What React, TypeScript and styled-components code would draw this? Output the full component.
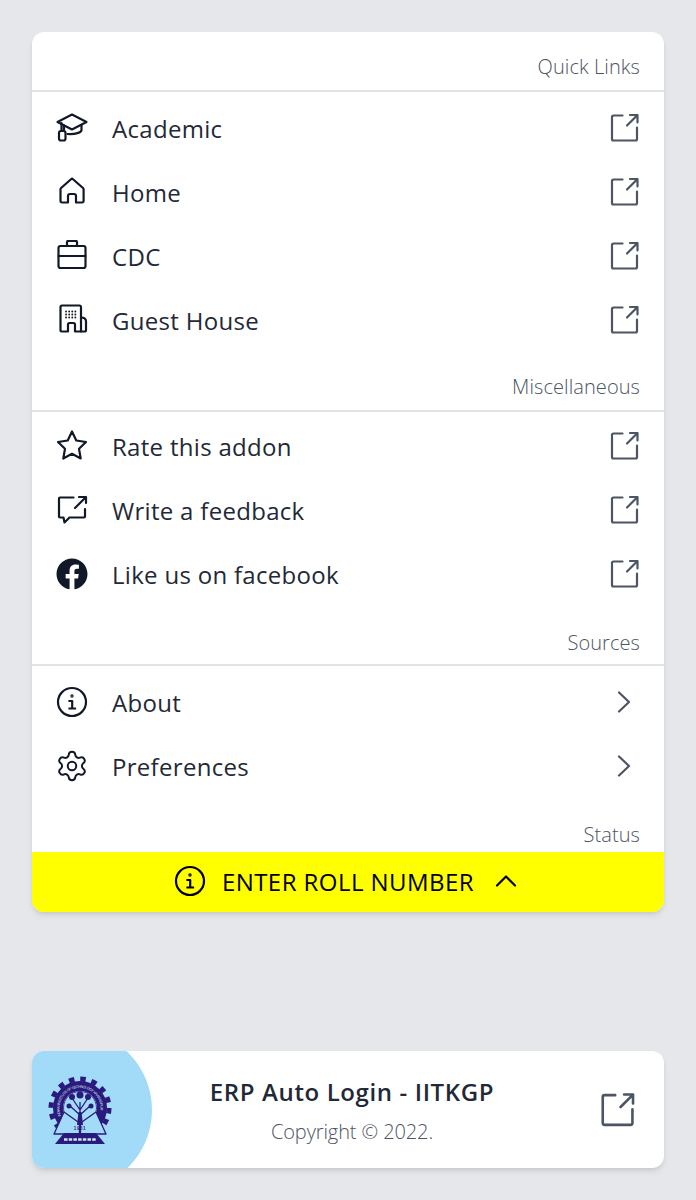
import { ReactNode } from 'react';
import styled, { createGlobalStyle } from 'styled-components';
import { FaFacebook } from 'react-icons/fa';
import { Settings } from 'lucide-react';

const GlobalStyle = createGlobalStyle`
  html, body {
    margin: 0;
    padding: 0;
    background: #e5e7eb;
  }
  * {
    box-sizing: border-box;
  }
`;

const Page = styled.div`
  width: 696px;
  height: 1200px;
  padding: 32px;
  display: flex;
  flex-direction: column;
  font-family: 'Open Sans', 'Noto Sans', sans-serif;
  color: #1f2937;
`;

const Card = styled.div`
  background: #fff;
  border-radius: 12px;
  overflow: hidden;
  box-shadow: 0 4px 6px -1px rgba(0, 0, 0, 0.1), 0 2px 4px -1px rgba(0, 0, 0, 0.06);
`;

const Section = styled.section<{ $top: number }>`
  padding-top: ${(p) => p.$top}px;
`;

const SectionLabel = styled.div<{ $height: number; $plain?: boolean }>`
  height: ${(p) => p.$height}px;
  padding: 0 24px;
  font-size: 20px;
  font-weight: 300;
  line-height: 28px;
  letter-spacing: 0.08px;
  text-align: right;
  color: #4b5563;
  border-bottom: ${(p) => (p.$plain ? 'none' : '2px solid #e1e3e8')};
`;

const RowList = styled.div<{ $top: number }>`
  padding-top: ${(p) => p.$top}px;
`;

const Row = styled.a`
  height: 64px;
  padding: 0 24px;
  display: flex;
  align-items: center;
  gap: 24px;
  font-size: 24px;
  letter-spacing: 0.3px;
  color: #1f2937;
`;

const RowText = styled.span`
  flex: 1;
`;

const RowIcon = styled.svg`
  width: 32px;
  height: 32px;
  flex: none;
  fill: none;
  stroke: #111827;
  stroke-width: 2.2;
  stroke-linecap: round;
  stroke-linejoin: round;
`;

const ActionIcon = styled(RowIcon)<{ $size?: number }>`
  width: ${(p) => p.$size ?? 32}px;
  height: ${(p) => p.$size ?? 32}px;
  stroke: #4b5563;
`;

const StatusBar = styled.div`
  height: 60px;
  padding-bottom: 2px;
  display: flex;
  align-items: center;
  justify-content: center;
  gap: 16px;
  background: #ffff00;
  color: #000;
  font-size: 24px;
  letter-spacing: 0.45px;
`;

const StatusIcon = styled(RowIcon)`
  stroke: #000;
`;

const Spacer = styled.div`
  flex: 1;
`;

const FooterCard = styled(Card)`
  height: 117px;
  display: grid;
  grid-template-columns: 120px 400px 112px;
  align-items: center;
`;

const LogoPanel = styled.div`
  position: relative;
  height: 117px;
  overflow: hidden;
  display: flex;
  align-items: center;
  padding-left: 12px;

  &::before {
    content: '';
    position: absolute;
    left: 0;
    top: -22.5px;
    width: 120px;
    height: 162px;
    border-radius: 0 81px 81px 0;
    background: #a1dbf8;
  }
`;

const Logo = styled.svg`
  position: relative;
  width: 72px;
  height: 80px;
`;

const FooterText = styled.div`
  display: flex;
  flex-direction: column;
  align-items: center;
  gap: 10px;
  padding-top: 3px;
`;

const FooterTitle = styled.div`
  font-size: 24px;
  font-weight: 600;
  line-height: 32px;
  letter-spacing: 0.62px;
`;

const FooterCopy = styled.div`
  font-size: 20px;
  font-weight: 300;
  line-height: 28px;
  letter-spacing: -0.1px;
  color: #4b5563;
`;

const FooterAction = styled.div`
  display: flex;
  padding-left: 46px;
`;

const External = ({ size }: { size?: number }) => (
  <ActionIcon $size={size} viewBox="0 0 32 32">
    <path d="M14.5 3.500H5.500A1.500 1.500 0 0 0 4 5v22a1.500 1.500 0 0 0 1.500 1.500h22A1.500 1.500 0 0 0 29 27V15.500" />
    <path d="M19 13.500 29.500 3M22 3h7.500v7.500" />
  </ActionIcon>
);

const Chevron = () => (
  <ActionIcon viewBox="0 0 32 32">
    <path d="M11 6.500 21 16 11 25.500" />
  </ActionIcon>
);

const CapIcon = () => (
  <RowIcon viewBox="0 0 32 32">
    <path d="M16 2.500 1.500 10 16 17.500 30.500 10Z" />
    <path d="M25.500 13v5c0 2.500-6 4.500-14 4" />
    <path d="M8 13.500V18M5.500 11v8" />
    <rect x="3" y="19" width="6.500" height="9.500" rx="2" />
  </RowIcon>
);

const HomeIcon = () => (
  <RowIcon viewBox="0 0 32 32">
    <path d="M15 3.200a1.500 1.500 0 0 1 2 0L27 12a2 2 0 0 1 .6 1.500V25a1.500 1.500 0 0 1-1.500 1.500H20v-6.500a2 2 0 0 0-2-2h-4a2 2 0 0 0-2 2v6.500H6a1.500 1.500 0 0 1-1.500-1.500V13.500a2 2 0 0 1 .6-1.500Z" />
  </RowIcon>
);

const BriefcaseIcon = () => (
  <RowIcon viewBox="0 0 32 32">
    <rect x="2.500" y="6" width="27" height="22" rx="2" />
    <path d="M2.500 16h27M11 6V2a1 1 0 0 1 1-1h8a1 1 0 0 1 1 1v4" />
  </RowIcon>
);

const BuildingIcon = () => (
  <RowIcon viewBox="0 0 32 32">
    <path d="M12 27.500H5.500a1 1 0 0 1-1-1V3a1.500 1.500 0 0 1 1.500-1.500h17.500a1.500 1.500 0 0 1 1.500 1.500v24.500h-6v-7a1.500 1.500 0 0 0-1.500-1.500h-4a1.500 1.500 0 0 0-1.500 1.500Z" />
    <path d="M25 13.500c3 0 5 1.500 5 4v8.500a1.500 1.500 0 0 1-1.500 1.500H25" />
    <path strokeWidth="1.800" strokeDasharray="0.1 3" d="M10 7.500h10M10 10.500h10M10 13.500h10" />
  </RowIcon>
);

const StarIcon = () => (
  <RowIcon viewBox="0 0 32 32">
    <path d="M16 1.500 20.300 10.500 30 12 23 18.800 24.700 28.500 16 23.800 7.300 28.500 9 18.800 2 12 11.700 10.500Z" />
  </RowIcon>
);

const ChatIcon = () => (
  <RowIcon viewBox="0 0 32 32">
    <path d="M17.500 3.500H4a1 1 0 0 0-1 1v18a1 1 0 0 0 1 1h3.500l1 5 5-5H28a1 1 0 0 0 1-1V15" />
    <path d="M19 14 30 3M23 3h7v6" />
  </RowIcon>
);

const InfoGlyph = () => (
  <>
    <circle cx="16" cy="16" r="14" />
    <circle cx="16" cy="10" r="0.6" />
    <path d="M13.500 15H16.200V22M13.500 22.500H19" strokeLinecap="square" />
  </>
);

const InfoIcon = () => (
  <RowIcon viewBox="0 0 32 32">
    <InfoGlyph />
  </RowIcon>
);

const FacebookIcon = styled(FaFacebook)`
  width: 32px;
  height: 32px;
  flex: none;
  color: #111827;
`;

const GearIcon = styled(Settings)`
  width: 34px;
  height: 34px;
  margin: 0 -1px;
  flex: none;
  color: #111827;
`;

const CampusLogo = () => (
  <Logo viewBox="0 0 72 80">
    <defs>
      <path id="ring" d="M17 46A20.500 20.500 0 1 1 55 46" />
    </defs>
    <circle cx="36" cy="38" r="29" fill="none" stroke="#2b1a7d" strokeWidth="5" strokeDasharray="5.500 5.890" />
    <circle cx="36" cy="38" r="22" fill="none" stroke="#2b1a7d" strokeWidth="10" />
    <text fill="#d7ecf8" fontSize="3.600" fontFamily="'Liberation Sans', sans-serif">
      <textPath href="#ring" textLength="74" lengthAdjust="spacing">
        INDIAN INSTITUTE OF TECHNOLOGY KHARAGPUR
      </textPath>
    </text>
    <circle cx="36" cy="38" r="16.500" fill="#a1dbf8" stroke="#2b1a7d" strokeWidth="0.800" />
    <path d="M10 64 20 42 35.500 53V64ZM62 64 52 42 36.500 53V64Z" fill="#a1dbf8" stroke="#2b1a7d" strokeWidth="1.300" strokeLinejoin="round" />
    <path d="M36 54V32M36 40 28 28M36 40 44 28M36 45 26 36M36 45 46 36" stroke="#2b1a7d" strokeWidth="1.300" fill="none" />
    <g fill="#2b1a7d">
      <circle cx="36" cy="25" r="3.500" />
      <circle cx="28" cy="27" r="3" />
      <circle cx="44" cy="27" r="3" />
      <circle cx="25" cy="36" r="2.500" />
      <circle cx="47" cy="36" r="2.500" />
      <path d="M34.500 42H37.500L39 55H33Z" />
      <path d="M20 63H52L61 74H11Z" />
    </g>
    <text x="36" y="60" fill="#2b1a7d" fontSize="4.500" fontWeight="700" letterSpacing="0.6" textAnchor="middle" fontFamily="'Liberation Sans', sans-serif">
      1951
    </text>
    <path d="M20 69.500H52" stroke="#cfe6f6" strokeWidth="2.500" strokeDasharray="3.500 1.200" />
  </Logo>
);

type Item = { label: string; icon: ReactNode; chevron?: boolean };

const quickLinks: Item[] = [
  { label: 'Academic', icon: <CapIcon /> },
  { label: 'Home', icon: <HomeIcon /> },
  { label: 'CDC', icon: <BriefcaseIcon /> },
  { label: 'Guest House', icon: <BuildingIcon /> },
];

const misc: Item[] = [
  { label: 'Rate this addon', icon: <StarIcon /> },
  { label: 'Write a feedback', icon: <ChatIcon /> },
  { label: 'Like us on facebook', icon: <FacebookIcon /> },
];

const sources: Item[] = [
  { label: 'About', icon: <InfoIcon />, chevron: true },
  { label: 'Preferences', icon: <GearIcon strokeWidth={1.4} />, chevron: true },
];

type GroupProps = {
  title: string;
  items: Item[];
  top: number;
  labelHeight: number;
  listTop: number;
};

const Group = ({ title, items, top, labelHeight, listTop }: GroupProps) => (
  <Section $top={top}>
    <SectionLabel $height={labelHeight}>{title}</SectionLabel>
    <RowList $top={listTop}>
      {items.map((item) => (
        <Row key={item.label}>
          {item.icon}
          <RowText>{item.label}</RowText>
          {item.chevron ? <Chevron /> : <External />}
        </Row>
      ))}
    </RowList>
  </Section>
);

const App = () => {
  return (
    <Page>
      <GlobalStyle />
      <Card>
        <Group title="Quick Links" items={quickLinks} top={21} labelHeight={39} listTop={4} />
        <Group title="Miscellaneous" items={misc} top={21} labelHeight={39} listTop={2} />
        <Group title="Sources" items={sources} top={23} labelHeight={37} listTop={4} />
        <Section $top={23}>
          <SectionLabel $height={31} $plain>
            Status
          </SectionLabel>
        </Section>
        <StatusBar>
          <StatusIcon viewBox="0 0 32 32">
            <InfoGlyph />
          </StatusIcon>
          ENTER ROLL NUMBER
          <StatusIcon viewBox="0 0 32 32" strokeWidth={2.5}>
            <path d="M7 20.500 16 11.500 25 20.500" />
          </StatusIcon>
        </StatusBar>
      </Card>
      <Spacer />
      <FooterCard>
        <LogoPanel>
          <CampusLogo />
        </LogoPanel>
        <FooterText>
          <FooterTitle>ERP Auto Login - IITKGP</FooterTitle>
          <FooterCopy>Copyright © 2022.</FooterCopy>
        </FooterText>
        <FooterAction>
          <External size={38} />
        </FooterAction>
      </FooterCard>
    </Page>
  );
};

export default App;
